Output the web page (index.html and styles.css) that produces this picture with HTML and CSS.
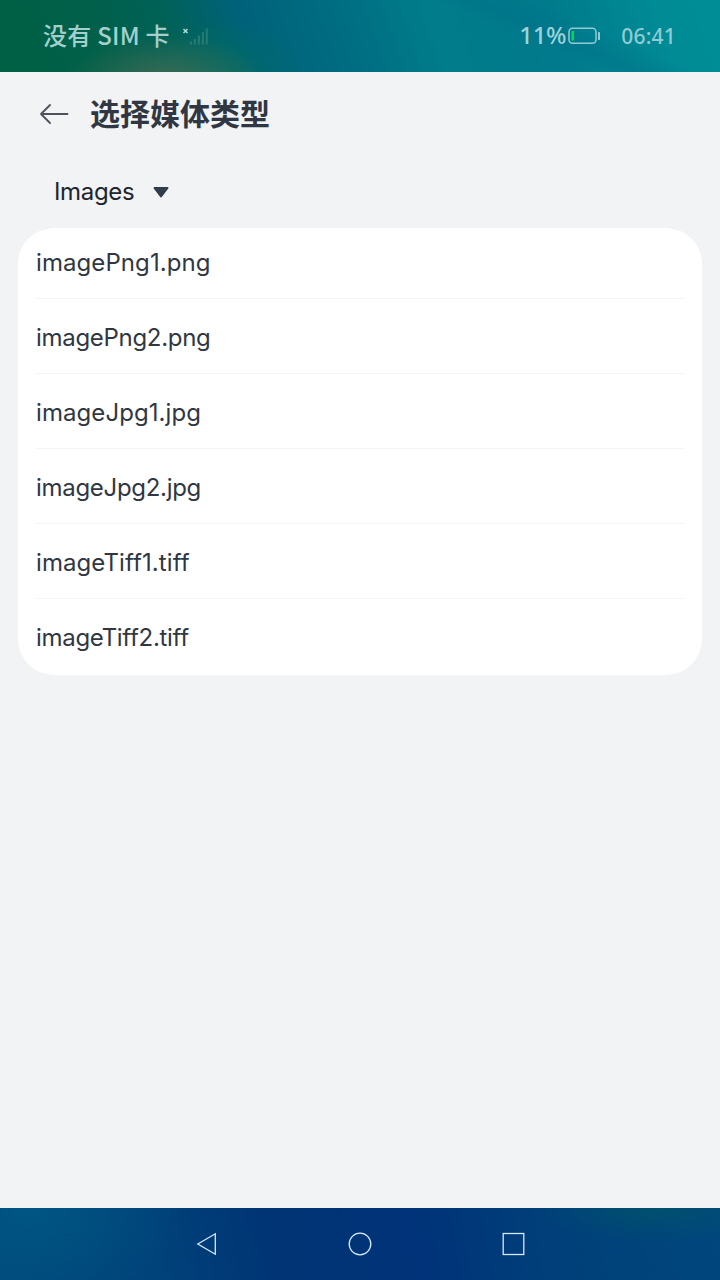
FILE: index.html
```html
<!DOCTYPE html>
<html lang="zh-CN">
<head>
<meta charset="utf-8">
<title>选择媒体类型</title>
<link rel="stylesheet" href="styles.css">
</head>
<body>
<header class="status">
  <span class="carrier">没有 SIM 卡</span>
  <svg class="signal" width="28" height="20" viewBox="0 0 28 20">
    <path class="signal-x" d="M1.500 3l4 4M5.500 3l-4 4"/>
    <path class="signal-bars" d="M9 15.500v3M12.900 13v5.500M16.900 9.500v9M20.900 6v12.500M24.800 2.500v16"/>
  </svg>
  <span class="percent">11%</span>
  <svg class="battery" width="34" height="18" viewBox="0 0 34 18">
    <rect class="battery-case" x="1" y="1.200" width="27" height="15" rx="3.500"/>
    <rect class="battery-level" x="3.500" y="3.700" width="2.500" height="10" rx="1"/>
    <rect class="battery-cap" x="30" y="5" width="2" height="8" rx=".6"/>
  </svg>
  <time class="clock">06:41</time>
</header>
<main class="page">
  <div class="titlebar">
    <svg class="back" width="30" height="24" viewBox="0 0 30 24">
      <path d="M11 3L2 12l9 9M2 12H28.500"/>
    </svg>
    <h1 class="title">选择媒体类型</h1>
  </div>
  <div class="select">
    <span class="select-label">Images</span>
    <svg class="caret" width="18" height="12" viewBox="0 0 18 12">
      <path d="M2.500 2h13L9 10.500z"/>
    </svg>
  </div>
  <ul class="list">
    <li class="item"><span class="name">imagePng1.png</span></li>
    <li class="item"><span class="name">imagePng2.png</span></li>
    <li class="item"><span class="name">imageJpg1.jpg</span></li>
    <li class="item"><span class="name">imageJpg2.jpg</span></li>
    <li class="item"><span class="name">imageTiff1.tiff</span></li>
    <li class="item"><span class="name">imageTiff2.tiff</span></li>
  </ul>
</main>
<nav class="navbar">
  <svg class="nav-icon" width="24" height="24" viewBox="0 0 24 24"><path d="M3.800 12L21.300 1.800v20.400z"/></svg>
  <svg class="nav-icon" width="24" height="24" viewBox="0 0 24 24"><circle cx="12" cy="12" r="10.800"/></svg>
  <svg class="nav-icon" width="24" height="24" viewBox="0 0 24 24"><rect x="1.200" y="1.500" width="20.600" height="21"/></svg>
</nav>
</body>
</html>
```
FILE: styles.css
```css
* { box-sizing: border-box; }
body {
  margin: 0;
  width: 720px;
  height: 1280px;
  display: flex;
  flex-direction: column;
  overflow: hidden;
  background: #f1f3f5;
  font-family: Inter, "Noto Sans CJK SC", sans-serif;
  color: #303742;
}
.status {
  height: 72px;
  flex: none;
  display: flex;
  align-items: center;
  padding: 0 44px 0 43px;
  color: #a3d0cd;
  background:
    radial-gradient(ellipse 100px 48px at 165px 82px, rgba(65, 107, 84, .95), transparent),
    radial-gradient(ellipse 80px 60px at 225px 78px, rgba(0, 112, 95, .7), transparent),
    linear-gradient(24deg, transparent 68%, rgba(0, 110, 135, .4) 72%, transparent 79%),
    linear-gradient(70deg, #006044 0, #00604a 15%, #006258 25%, #00627a 35%, #006d82 48%, #007c8a 60%, #007a8c 76%, #008b95 91%, #008e96 100%);
}
.carrier {
  width: 139px;
  white-space: nowrap;
  font: 500 24px/36px "Noto Sans CJK SC", sans-serif;
  letter-spacing: .25px;
  margin-top: -3px;
}
.signal { flex: none; fill: none; }
.signal-x { stroke: #a9dcd2; stroke-width: 1.6; }
.signal-bars { stroke: #277b70; stroke-width: 2; }
.percent {
  margin: -2px 0 0 auto;
  font: 500 24px/36px "Noto Sans", sans-serif;
  letter-spacing: -.3px;
  color: #9bd3da;
}
.battery { flex: none; margin: 0 19px 0 2px; }
.battery-case { fill: none; stroke: #91cbd3; stroke-width: 1.5; }
.battery-level { fill: #00dc51; }
.battery-cap { fill: #91cbd3; }
.clock { font: 500 21px/36px "Noto Sans", sans-serif; letter-spacing: .2px; color: #91cbd3; }
.page { flex: 1; padding: 0 18px; }
.titlebar { height: 84px; display: flex; align-items: center; padding-left: 21px; }
.back { flex: none; fill: none; stroke: #52505c; stroke-width: 1.8; stroke-linecap: round; stroke-linejoin: round; }
.title { margin: -5px 0 0 21px; font: 700 30px/42px "Noto Sans CJK SC", sans-serif; }
.select { height: 72px; display: flex; align-items: center; padding-left: 36px; color: #20252d; font-size: 24px; }
.select-label { width: 98px; margin-top: -2px; letter-spacing: -.35px; }
.caret { fill: #303d4b; stroke: #303d4b; stroke-width: 2; stroke-linejoin: round; }
.list { margin: 0; padding: 0 18px; height: 447px; list-style: none; background: #fff; border-radius: 36px; }
.item { height: 75px; padding-bottom: 5px; display: flex; align-items: center; position: relative; }
.item:not(:last-child)::after { content: ""; position: absolute; left: 0; right: 0; bottom: 4px; height: 1px; background: #f3f4f5; }
.name { font-size: 24px; line-height: 34px; white-space: nowrap; letter-spacing: .08px; }
.item:nth-child(even) .name { letter-spacing: -.3px; }
.navbar {
  height: 72px;
  flex: none;
  display: flex;
  align-items: center;
  justify-content: center;
  gap: 130px;
  background:
    radial-gradient(ellipse 120px 35px at 655px 0, rgba(0, 85, 105, .7), transparent),
    radial-gradient(ellipse 150px 110px at 30px 0, rgba(0, 90, 132, .8), transparent),
    linear-gradient(80deg, #00487b 0, #00427a 22%, #003474 38%, #003379 58%, #003f79 75%, #00477d 100%);
}
.nav-icon { fill: none; stroke: #d5e9ff; stroke-width: 1.3; }
```
